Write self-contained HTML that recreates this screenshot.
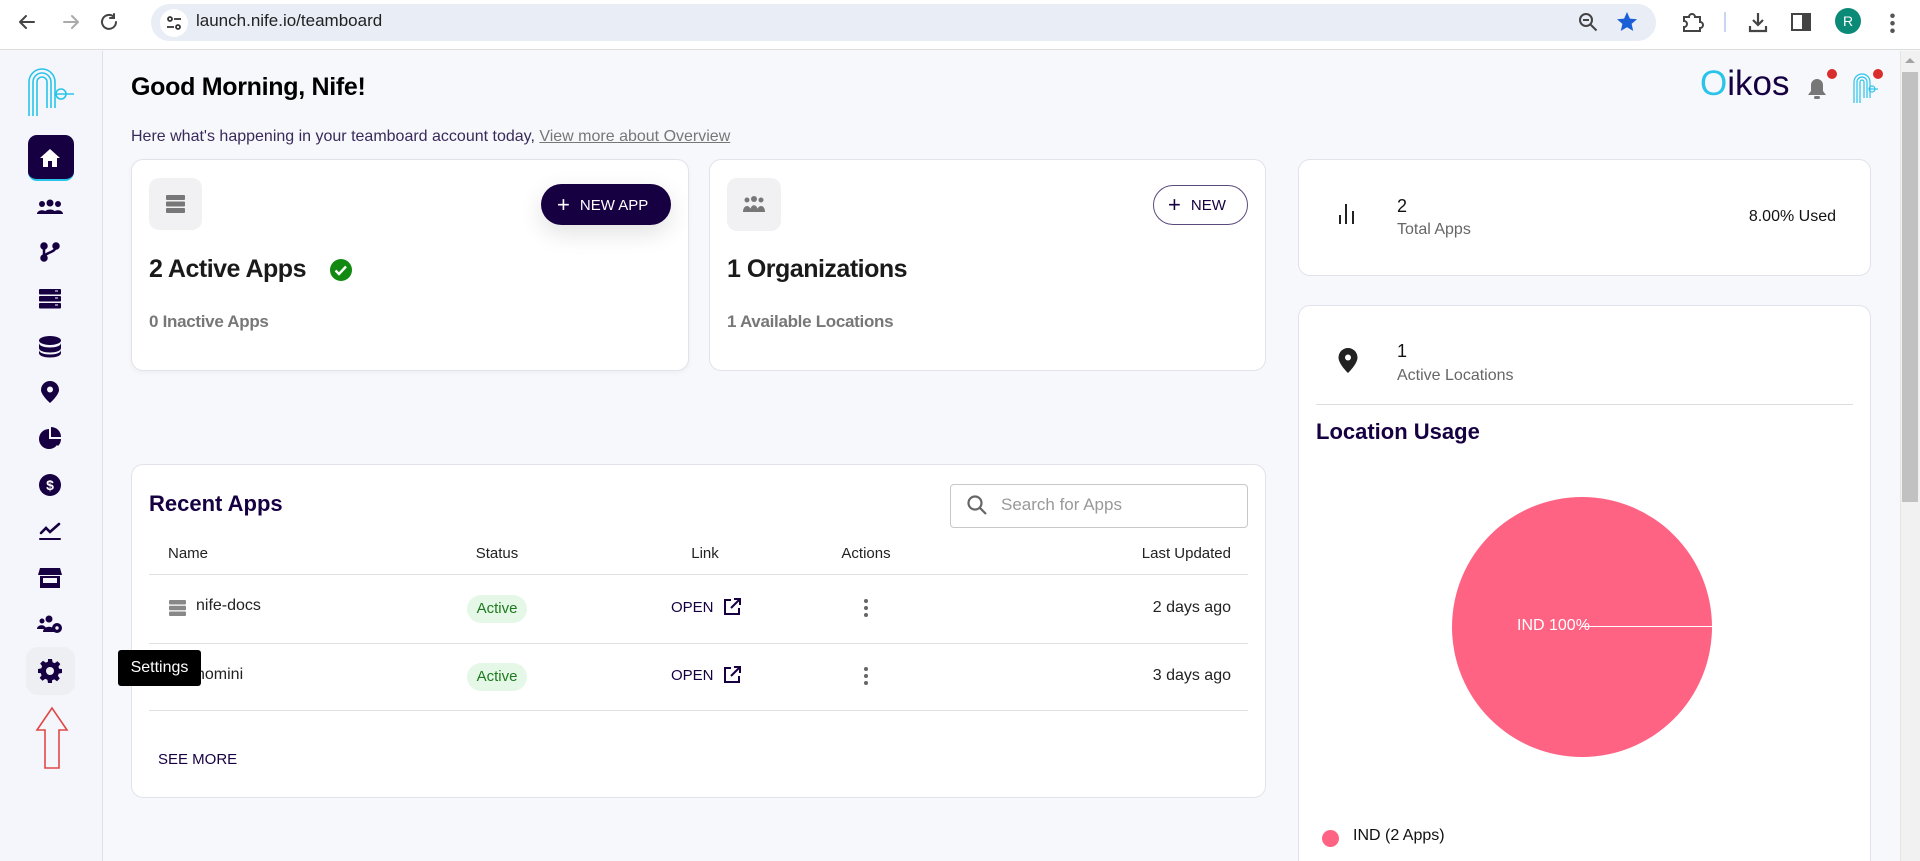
<!DOCTYPE html>
<html><head><meta charset="utf-8"><style>
*{box-sizing:border-box;margin:0;padding:0}
html,body{width:1920px;height:861px;overflow:hidden}
body{background:#f7f8fc;font-family:"Liberation Sans",sans-serif;position:relative;color:#111}
.abs{position:absolute}
.card{position:absolute;background:#fff;border:1px solid #e2e3ea;border-radius:12px}
.ic{position:absolute;left:50px;transform:translate(-50%,-50%)}
</style></head><body>
<!-- browser bar -->
<div class="abs" style="left:0;top:0;width:1920px;height:50px;background:#fff;border-bottom:1px solid #dcdcdc"></div>
<svg class="abs" style="left:16px;top:11px" width="110" height="22" viewBox="0 0 110 22" fill="none" stroke-width="2" stroke-linecap="round">
<path d="M4 11h14M4 11l6-6M4 11l6 6" stroke="#444"/>
<path d="M48 11h14M62 11l-6-6M62 11l-6 6" stroke="#aaa"/>
<path d="M98 6a7 7 0 1 0 2 5M98 3v4h-4" stroke="#444"/>
</svg>
<div class="abs" style="left:151px;top:4px;width:1505px;height:37px;border-radius:19px;background:#e9edf6"></div>
<div class="abs" style="left:160px;top:9px;width:28px;height:28px;border-radius:14px;background:#fff"></div>
<svg class="abs" style="left:165px;top:14px" width="18" height="18" viewBox="0 0 18 18" fill="none" stroke="#333" stroke-width="1.8"><circle cx="5" cy="5" r="2"/><path d="M9 5h7M2 13h7"/><circle cx="13" cy="13" r="2"/></svg>
<div class="abs" style="left:196px;top:11px;font-size:17px;color:#222">launch.nife.io/teamboard</div>
<svg class="abs" style="left:1577px;top:11px" width="22" height="22" viewBox="0 0 22 22" fill="none" stroke="#444" stroke-width="2"><circle cx="9" cy="9" r="6"/><path d="M13.5 13.5l6 6M6 9h6"/></svg>
<svg class="abs" style="left:1615px;top:10px" width="24" height="24" viewBox="0 0 24 24"><path d="M12 2l2.9 6.6 7.1.6-5.4 4.7 1.6 7-6.2-3.7-6.2 3.7 1.6-7L2 9.2l7.1-.6z" fill="#1a5fd6"/></svg>
<svg class="abs" style="left:1680px;top:10px" width="24" height="24" viewBox="0 0 24 24" fill="none" stroke="#444" stroke-width="2"><path d="M4 7h5a3 3 0 0 1 6 0h5v5a3 3 0 0 1 0 6v3H4v-4a3 3 0 0 0 0-6z"/></svg>
<div class="abs" style="left:1724px;top:12px;width:2px;height:20px;background:#c9d6f0"></div>
<svg class="abs" style="left:1746px;top:10px" width="24" height="24" viewBox="0 0 24 24" fill="none" stroke="#444" stroke-width="2.2"><path d="M12 3v12M7 10l5 5 5-5M4 16v5h16v-5"/></svg>
<svg class="abs" style="left:1790px;top:11px" width="22" height="22" viewBox="0 0 22 22"><rect x="2" y="3" width="18" height="16" fill="none" stroke="#444" stroke-width="2"/><rect x="12" y="3" width="8" height="16" fill="#444"/></svg>
<div class="abs" style="left:1835px;top:8px;width:26px;height:26px;border-radius:13px;background:#0b8a78;color:#fff;font-size:14px;text-align:center;line-height:26px">R</div>
<div class="abs" style="left:1890px;top:12px;width:5px;height:22px;background:radial-gradient(circle,#555 2px,transparent 2.5px) 0 0/5px 7.5px"></div>

<!-- scrollbar -->
<div class="abs" style="left:1900px;top:51px;width:20px;height:810px;background:#f1f1f1;border-left:1px solid #e4e4e4"></div>
<div class="abs" style="left:1905px;top:58px;width:0;height:0;border-left:5px solid transparent;border-right:5px solid transparent;border-bottom:5px solid #a3a3a3"></div>
<div class="abs" style="left:1902px;top:72px;width:16px;height:430px;background:#c1c1c1"></div>

<!-- sidebar -->
<div class="abs" style="left:0;top:51px;width:103px;height:810px;background:#f5f6fb;border-right:1px solid #dfe0e6"></div>
<svg class="abs" style="left:26px;top:66px" width="50" height="52" viewBox="0 0 50 52" fill="none" stroke="#2ac4ea" stroke-width="1.6">
<path d="M3 50V16a13 13 0 0 1 26 0v26"/><path d="M7 50V16a9 9 0 0 1 18 0v26"/><path d="M11 50V16a5 5 0 0 1 10 0v26"/>
<circle cx="35" cy="28" r="5"/><path d="M30 28h18"/></svg>
<div class="abs" style="left:28px;top:135px;width:46px;height:46px;border-radius:9px;background:#160042;border-bottom:2px solid #2ac4ea"></div>
<svg class="ic" style="top:158px" width="22" height="20" viewBox="0 0 22 20"><path d="M11 1L1 10h3v9h5v-6h4v6h5v-9h3z" fill="#fff"/></svg>
<svg class="ic" style="top:207px" width="26" height="16" viewBox="0 0 26 16" fill="#160042"><circle cx="5" cy="5" r="3"/><circle cx="13" cy="4" r="3.5"/><circle cx="21" cy="5" r="3"/><path d="M0 15c0-5 10-5 10 0zM7 15c0-6 12-6 12 0zM16 15c0-5 10-5 10 0z"/></svg>
<svg class="ic" style="top:252px" width="20" height="20" viewBox="0 0 20 20" fill="none" stroke="#160042" stroke-width="2.5"><circle cx="4" cy="4" r="2.5" fill="#160042"/><circle cx="4" cy="16" r="2.5" fill="#160042"/><circle cx="16" cy="4" r="2.5" fill="#160042"/><path d="M4 4v12M16 4c0 6-8 6-12 10"/></svg>
<svg class="ic" style="top:299px" width="22" height="20" viewBox="0 0 22 20" fill="#160042"><rect y="0" width="22" height="5.5" rx="1"/><rect y="7" width="22" height="5.5" rx="1"/><rect y="14" width="22" height="5.5" rx="1"/><path d="M16 2h3M16 9h3M16 16h3" stroke="#fff" stroke-width="1"/></svg>
<svg class="ic" style="top:347px" width="22" height="22" viewBox="0 0 22 22" fill="#160042"><ellipse cx="11" cy="4.5" rx="11" ry="4.5"/><path d="M0 7c0 6 22 6 22 0v5c0 6-22 6-22 0zM0 14c0 6 22 6 22 0v3c0 6-22 6-22 0z"/></svg>
<svg class="ic" style="top:392px" width="18" height="22" viewBox="0 0 18 22"><path d="M9 0a9 9 0 0 1 9 9c0 5-9 13-9 13S0 14 0 9a9 9 0 0 1 9-9z" fill="#160042"/><circle cx="9" cy="8.5" r="3" fill="#f5f6fb"/></svg>
<svg class="ic" style="top:438px" width="22" height="22" viewBox="0 0 22 22" fill="#160042"><path d="M10 2a10 10 0 1 0 10 10H10z"/><path d="M12 0v10h10A10 10 0 0 0 12 0z"/><path d="M12 12h10a10 10 0 0 1-3 7z"/></svg>
<svg class="ic" style="top:485px" width="22" height="22" viewBox="0 0 22 22"><circle cx="11" cy="11" r="11" fill="#160042"/><text x="11" y="16" font-size="14" font-weight="bold" text-anchor="middle" fill="#fff" font-family="Liberation Sans">$</text></svg>
<svg class="ic" style="top:531px" width="22" height="20" viewBox="0 0 22 20" fill="none" stroke="#160042" stroke-width="2.6" stroke-linecap="round"><path d="M2 12l5-5 4 4 9-8"/><path d="M1 18h20" stroke-width="2"/></svg>
<svg class="ic" style="top:578px" width="24" height="20" viewBox="0 0 24 20" fill="#160042"><path d="M2 0h20l2 7H0z"/><path d="M2 8h20v12H2z"/><rect x="5" y="10" width="14" height="5" fill="#f5f6fb"/></svg>
<svg class="ic" style="top:624px" width="26" height="18" viewBox="0 0 26 18" fill="#160042"><circle cx="5" cy="6" r="2.5"/><circle cx="12" cy="4" r="3.5"/><path d="M0 14c0-5 9-5 9 0zM6 17c0-7 12-7 12 0z"/><circle cx="20" cy="13" r="5"/><circle cx="20" cy="13" r="1.7" fill="#f5f6fb"/></svg>
<div class="abs" style="left:26px;top:647px;width:49px;height:48px;border-radius:12px;background:#eeeff2"></div>
<svg class="ic" style="top:671px" width="24" height="24" viewBox="0 0 24 24"><path fill="#160042" d="M10 0h4l.6 3.2 2.2.9 2.7-1.9 2.8 2.8-1.9 2.7.9 2.2L24 10v4l-3.2.6-.9 2.2 1.9 2.7-2.8 2.8-2.7-1.9-2.2.9L14 24h-4l-.6-3.2-2.2-.9-2.7 1.9-2.8-2.8 1.9-2.7-.9-2.2L0 14v-4l3.2-.6.9-2.2-1.9-2.7 2.8-2.8 2.7 1.9 2.2-.9z"/><circle cx="12" cy="12" r="4" fill="#eeeff2"/></svg>
<svg class="abs" style="left:35px;top:706px" width="34" height="64" viewBox="0 0 34 64" fill="none" stroke="#e04848" stroke-width="1.6"><path d="M17 2L2 24h8v38h14V24h8z"/></svg>

<!-- header -->
<div class="abs" style="left:131px;top:73px;font-size:25px;font-weight:bold;color:#000;letter-spacing:-0.3px">Good Morning, Nife!</div>
<div class="abs" style="left:131px;top:128px;font-size:16px;color:#3a2a5a">Here what's happening in your teamboard account today, <span style="color:#777;text-decoration:underline">View more about Overview</span></div>
<div class="abs" style="left:1700px;top:64px;font-size:35px;color:#160042"><span style="color:#2ac4ea">O</span>ikos</div>
<svg class="abs" style="left:1807px;top:78px" width="20" height="22" viewBox="0 0 20 22"><path d="M10 1a6 6 0 0 1 6 6v6l3 4H1l3-4V7a6 6 0 0 1 6-6z" fill="#777"/><rect x="7" y="18" width="6" height="3" rx="1.5" fill="#777"/></svg>
<div class="abs" style="left:1827px;top:69px;width:10px;height:10px;border-radius:5px;background:#d92d2d"></div>
<svg class="abs" style="left:1852px;top:72px" width="26" height="32" viewBox="0 0 26 32" fill="none" stroke="#2ac4ea" stroke-width="1.2"><path d="M2 31V10a8 8 0 0 1 16 0v16"/><path d="M5 31V10a5 5 0 0 1 10 0v16"/><path d="M8 31V10a2 2 0 0 1 4 0v16"/><circle cx="20" cy="17" r="3"/><path d="M17 17h9"/></svg>
<div class="abs" style="left:1873px;top:69px;width:10px;height:10px;border-radius:5px;background:#d92d2d"></div>

<!-- card 1 -->
<div class="card" style="left:131px;top:159px;width:558px;height:212px;box-shadow:0 2px 6px rgba(0,0,0,.04)"></div>
<div class="abs" style="left:149px;top:178px;width:53px;height:52px;border-radius:10px;background:#f1f1f3"></div>
<svg class="abs" style="left:166px;top:195px" width="19" height="18" viewBox="0 0 19 18" fill="#777"><rect width="19" height="5" rx="1"/><rect y="6.5" width="19" height="5" rx="1"/><rect y="13" width="19" height="5" rx="1"/></svg>
<div class="abs" style="left:541px;top:184px;width:130px;height:41px;border-radius:21px;background:#160042;box-shadow:0 8px 24px rgba(0,0,0,.12);color:#fff;font-size:15px;line-height:41px;padding-left:16px"><span style="font-size:22px;vertical-align:-2px;margin-right:10px">+</span>NEW APP</div>
<div class="abs" style="left:149px;top:255px;font-size:25px;font-weight:bold;color:#1a1a1a;letter-spacing:-0.5px">2 Active Apps</div>
<svg class="abs" style="left:329px;top:258px" width="24" height="24" viewBox="0 0 24 24"><circle cx="12" cy="12" r="11" fill="#128a12"/><path d="M6.5 12.5l3.5 3.5 7-7.5" fill="none" stroke="#fff" stroke-width="2.4"/></svg>
<div class="abs" style="left:149px;top:312px;font-size:17px;color:#777;font-weight:bold;letter-spacing:-0.3px">0 Inactive Apps</div>

<!-- card 2 -->
<div class="card" style="left:709px;top:159px;width:557px;height:212px"></div>
<div class="abs" style="left:727px;top:178px;width:54px;height:53px;border-radius:10px;background:#f1f1f3"></div>
<svg class="abs" style="left:742px;top:195px" width="24" height="18" viewBox="0 0 24 18" fill="#777"><circle cx="5" cy="5" r="2.5"/><circle cx="12" cy="4" r="3"/><circle cx="19" cy="5" r="2.5"/><path d="M1 17c0-8 8-8 8 0zM8 17c0-9 8-9 8 0zM15 17c0-8 8-8 8 0z"/></svg>
<div class="abs" style="left:1153px;top:185px;width:95px;height:40px;border-radius:20px;border:1px solid #5a4a7a;color:#160042;font-size:15px;line-height:38px;padding-left:14px"><span style="font-size:22px;vertical-align:-2px;margin-right:10px">+</span>NEW</div>
<div class="abs" style="left:727px;top:255px;font-size:25px;font-weight:bold;color:#1a1a1a;letter-spacing:-0.5px">1 Organizations</div>
<div class="abs" style="left:727px;top:312px;font-size:17px;color:#777;font-weight:bold;letter-spacing:-0.3px">1 Available Locations</div>

<!-- right card 1 -->
<div class="card" style="left:1298px;top:159px;width:573px;height:117px"></div>
<svg class="abs" style="left:1338px;top:204px" width="18" height="20" viewBox="0 0 18 20" fill="#222"><rect x="1" y="11" width="2" height="9"/><rect x="7" y="0" width="2" height="20"/><rect x="14" y="7" width="2" height="13"/></svg>
<div class="abs" style="left:1397px;top:196px;font-size:18px;color:#111">2</div>
<div class="abs" style="left:1397px;top:221px;font-size:16px;color:#666">Total Apps</div>
<div class="abs" style="left:1700px;top:208px;width:136px;text-align:right;font-size:16px;color:#111">8.00% Used</div>

<!-- right card 2 -->
<div class="card" style="left:1298px;top:305px;width:573px;height:580px"></div>
<svg class="abs" style="left:1338px;top:348px" width="20" height="25" viewBox="0 0 20 25"><path d="M10 0a9.5 9.5 0 0 1 9.5 9.5C19.5 16 10 25 10 25S.5 16 .5 9.5A9.5 9.5 0 0 1 10 0z" fill="#222"/><circle cx="10" cy="9.5" r="3" fill="#fff"/></svg>
<div class="abs" style="left:1397px;top:341px;font-size:18px;color:#111">1</div>
<div class="abs" style="left:1397px;top:367px;font-size:16px;color:#666">Active Locations</div>
<div class="abs" style="left:1316px;top:404px;width:537px;height:1px;background:#ddd"></div>
<div class="abs" style="left:1316px;top:419px;font-size:22px;font-weight:bold;color:#160042">Location Usage</div>
<div class="abs" style="left:1452px;top:497px;width:260px;height:260px;border-radius:50%;background:#ff6384"></div>
<div class="abs" style="left:1582px;top:626px;width:130px;height:1px;background:#fff"></div>
<div class="abs" style="left:1517px;top:617px;font-size:16px;color:#fff">IND 100%</div>
<div class="abs" style="left:1322px;top:830px;width:17px;height:17px;border-radius:50%;background:#ff6384"></div>
<div class="abs" style="left:1353px;top:827px;font-size:16px;color:#111">IND (2 Apps)</div>

<!-- recent apps -->
<div class="card" style="left:131px;top:464px;width:1135px;height:334px"></div>
<div class="abs" style="left:149px;top:491px;font-size:22px;font-weight:bold;color:#160042">Recent Apps</div>
<div class="abs" style="left:950px;top:484px;width:298px;height:44px;border:1px solid #c8c8c8;border-radius:4px"></div>
<svg class="abs" style="left:966px;top:494px" width="22" height="22" viewBox="0 0 22 22" fill="none" stroke="#666" stroke-width="2.2"><circle cx="9" cy="9" r="6.5"/><path d="M14 14l6 6"/></svg>
<div class="abs" style="left:1001px;top:495px;font-size:17px;color:#999">Search for Apps</div>
<div class="abs" style="left:168px;top:545px;font-size:15px;color:#222">Name</div>
<div class="abs" style="left:447px;top:545px;width:100px;text-align:center;font-size:15px;color:#222">Status</div>
<div class="abs" style="left:655px;top:545px;width:100px;text-align:center;font-size:15px;color:#222">Link</div>
<div class="abs" style="left:816px;top:545px;width:100px;text-align:center;font-size:15px;color:#222">Actions</div>
<div class="abs" style="left:1031px;top:545px;width:200px;text-align:right;font-size:15px;color:#222">Last Updated</div>
<div class="abs" style="left:149px;top:574px;width:1099px;height:1px;background:#e0e0e0"></div>
<div class="abs" style="left:149px;top:643px;width:1099px;height:1px;background:#e0e0e0"></div>
<div class="abs" style="left:149px;top:710px;width:1099px;height:1px;background:#e0e0e0"></div>

<svg class="abs" style="left:169px;top:600px" width="17" height="16" viewBox="0 0 17 16" fill="#888"><rect width="17" height="4.5" rx="1"/><rect y="5.7" width="17" height="4.5" rx="1"/><rect y="11.5" width="17" height="4.5" rx="1"/></svg>
<div class="abs" style="left:196px;top:597px;font-size:16px;color:#222">nife-docs</div>
<div class="abs" style="left:196px;top:666px;font-size:16px;color:#222">nomini</div>

<div class="abs" style="left:467px;top:595px;width:60px;height:28px;border-radius:14px;background:#e5f8e8;color:#1e7a1e;font-size:15px;line-height:28px;text-align:center">Active</div>
<div class="abs" style="left:467px;top:663px;width:60px;height:28px;border-radius:14px;background:#e5f8e8;color:#1e7a1e;font-size:15px;line-height:28px;text-align:center">Active</div>

<div class="abs" style="left:671px;top:599px;font-size:15px;color:#160042">OPEN</div>
<div class="abs" style="left:671px;top:667px;font-size:15px;color:#160042">OPEN</div>
<svg class="abs" style="left:723px;top:598px" width="18" height="18" viewBox="0 0 18 18" fill="none" stroke="#160042" stroke-width="2"><path d="M8 2H2v14h14v-6M11 1h6v6M17 1L8 10"/></svg>
<svg class="abs" style="left:723px;top:666px" width="18" height="18" viewBox="0 0 18 18" fill="none" stroke="#160042" stroke-width="2"><path d="M8 2H2v14h14v-6M11 1h6v6M17 1L8 10"/></svg>
<svg class="abs" style="left:862px;top:598px" width="8" height="20" viewBox="0 0 8 20" fill="#666"><circle cx="4" cy="3" r="2"/><circle cx="4" cy="10" r="2"/><circle cx="4" cy="17" r="2"/></svg>
<svg class="abs" style="left:862px;top:666px" width="8" height="20" viewBox="0 0 8 20" fill="#666"><circle cx="4" cy="3" r="2"/><circle cx="4" cy="10" r="2"/><circle cx="4" cy="17" r="2"/></svg>

<div class="abs" style="left:1031px;top:599px;width:200px;text-align:right;font-size:16px;color:#222">2 days ago</div>
<div class="abs" style="left:1031px;top:667px;width:200px;text-align:right;font-size:16px;color:#222">3 days ago</div>
<div class="abs" style="left:158px;top:751px;font-size:15px;color:#160042">SEE MORE</div>

<!-- tooltip on top -->
<div class="abs" style="left:118px;top:650px;width:83px;height:36px;background:#000;border-radius:3px;color:#fff;font-size:16px;line-height:36px;text-align:center;z-index:10">Settings</div>
</body></html>
